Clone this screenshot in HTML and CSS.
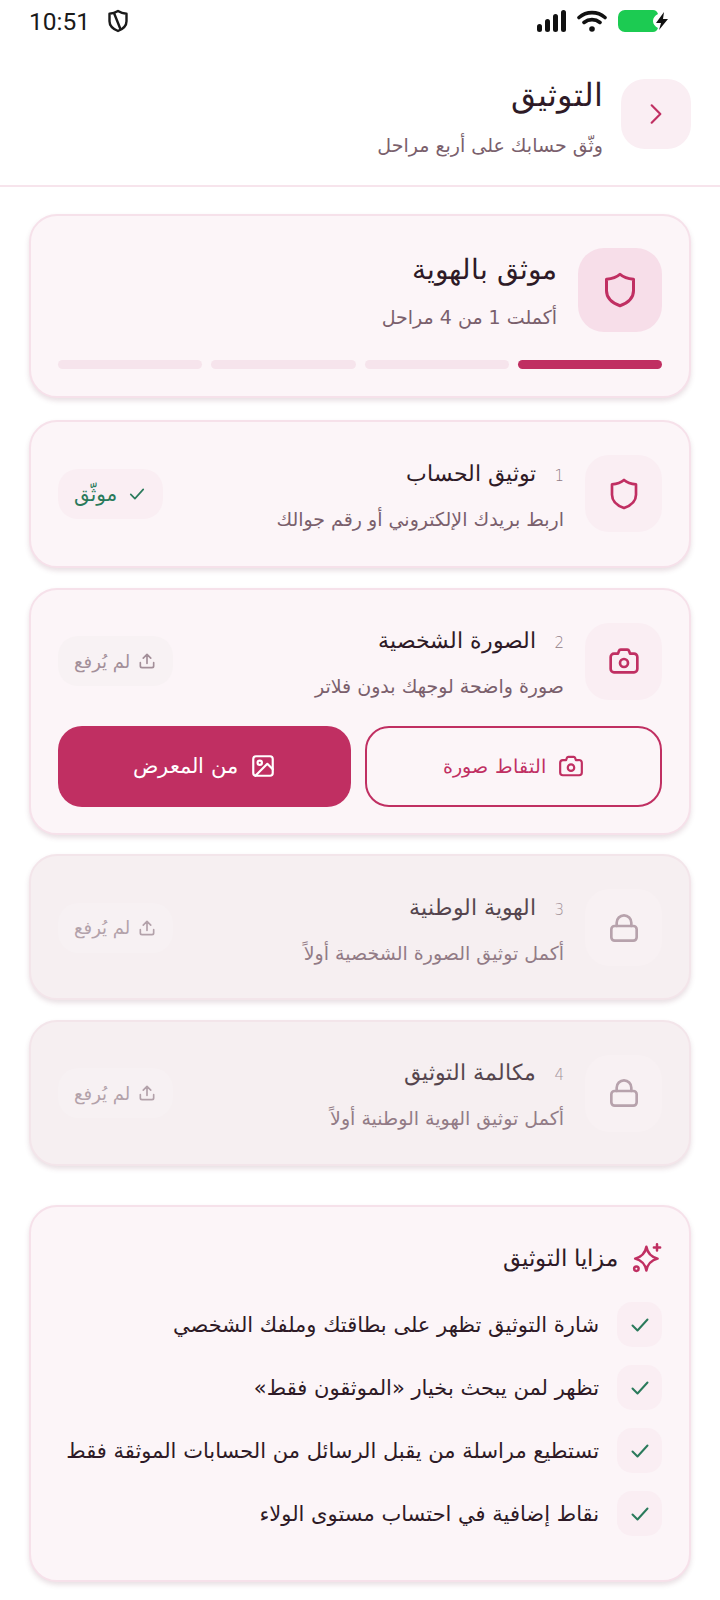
FILE: index.html
```html
<!DOCTYPE html>
<html lang="ar" dir="rtl">
  <head>
    <meta charset="UTF-8" />
    <meta name="viewport" content="width=device-width, initial-scale=1.0" />
    <title>التوثيق</title>
    <link rel="stylesheet" href="styles.css">
  </head>
  <body>
    <svg class="defs" width="0" height="0">
      <defs>
        <symbol id="shield" viewBox="0 0 24 24"><path d="M12 1.500c2 1.800 5 3 9 3.300v7.700c0 4.500-3.500 8-9 10-5.500-2-9-5.500-9-10V4.800c4-.3 7-1.500 9-3.300z"/></symbol>
        <symbol id="camera" viewBox="0 0 24 24"><path d="M7.500 6.500l.7-2c.2-.6.7-1 1.300-1h5c.6 0 1.100.4 1.300 1l.7 2h2.500A2.500 2.500 0 0 1 22 9v9a2.500 2.500 0 0 1-2.500 2.500h-15A2.500 2.500 0 0 1 2 18V9a2.500 2.500 0 0 1 2.500-2.500z"/><circle cx="12" cy="13.500" r="3"/></symbol>
        <symbol id="lock" viewBox="0 0 24 24"><rect x="2.500" y="10.500" width="19" height="11" rx="2.500"/><path d="M6.500 10.500V8a5.500 5.500 0 0 1 11 0v2.500"/></symbol>
        <symbol id="upload" viewBox="0 0 24 24"><path d="M12 15V4M7.500 8.500L12 4l4.500 4.500M4 14v4a2 2 0 0 0 2 2h12a2 2 0 0 0 2-2v-4"/></symbol>
        <symbol id="check" viewBox="0 0 24 24"><path d="M4.500 12.500l5 5 10-11"/></symbol>
        <symbol id="image" viewBox="0 0 24 24"><rect x="3" y="3" width="18" height="18" rx="2.500"/><circle cx="9" cy="9" r="2"/><path d="M21 15l-5-5L5 21"/></symbol>
      </defs>
    </svg>

    <div class="status">
      <div class="status-side">
        <span class="time">10:51</span>
        <svg class="status-shield" viewBox="0 0 24 24"><path d="M12 2c2.600 1.700 5.200 2.500 8.500 2.700v7.500c0 4.300-3.400 7.700-8.500 9.800-5.100-2.100-8.500-5.500-8.500-9.800V4.700C6.800 4.500 9.400 3.700 12 2z"/><path d="M8 4l6 15"/></svg>
      </div>
      <div class="status-side">
        <svg class="signal" viewBox="0 0 30 22"><rect x="1" y="14" width="5" height="8" rx="2.500"/><rect x="9" y="9" width="5" height="13" rx="2.500"/><rect x="17" y="4" width="5" height="18" rx="2.500"/><rect x="25" y="0" width="5" height="22" rx="2.500"/></svg>
        <svg class="wifi" viewBox="0 0 30 22"><path d="M2 7.500c7.500-6.500 18.500-6.500 26 0M7 12.500c4.800-3.800 11.200-3.800 16 0"/><circle cx="15" cy="19" r="2.800"/></svg>
        <svg class="battery" viewBox="0 0 52 22"><path class="battery-fill" d="M7 0h27a6 6 0 0 1 6 4c-3 1.500-5 4-5 7s2 5.500 5 7a6 6 0 0 1-6 4H7a7 7 0 0 1-7-7V7a7 7 0 0 1 7-7z"/><path d="M46 2l-8 11h5l-2 7 9-11h-5z"/></svg>
      </div>
    </div>

    <header class="top">
      <button class="back">
        <svg viewBox="0 0 24 24"><path d="M8 4l8 8-8 8"/></svg>
      </button>
      <div>
        <h1>التوثيق</h1>
        <p>وثّق حسابك على أربع مراحل</p>
      </div>
    </header>

    <main class="list">
      <section class="card card-summary">
        <div class="row">
          <div class="box box-big"><svg class="ico"><use href="#shield"/></svg></div>
          <div class="info">
            <h2>موثق بالهوية</h2>
            <p>أكملت 1 من 4 مراحل</p>
          </div>
        </div>
        <div class="progress">
          <span class="on"></span><span></span><span></span><span></span>
        </div>
      </section>

      <section class="card card-done">
        <div class="row">
          <div class="box"><svg class="ico"><use href="#shield"/></svg></div>
          <div class="info">
            <h3><small>1</small>توثيق الحساب</h3>
            <p>اربط بريدك الإلكتروني أو رقم جوالك</p>
          </div>
          <div class="pill pill-ok"><svg><use href="#check"/></svg>موثّق</div>
        </div>
      </section>

      <section class="card card-actions">
        <div class="row">
          <div class="box"><svg class="ico"><use href="#camera"/></svg></div>
          <div class="info">
            <h3><small>2</small>الصورة الشخصية</h3>
            <p>صورة واضحة لوجهك بدون فلاتر</p>
          </div>
          <div class="pill"><svg><use href="#upload"/></svg>لم يُرفع</div>
        </div>
        <div class="actions">
          <button class="btn btn-line"><svg><use href="#camera"/></svg>التقاط صورة</button>
          <button class="btn btn-fill"><svg><use href="#image"/></svg>من المعرض</button>
        </div>
      </section>

      <section class="card locked">
        <div class="row">
          <div class="box"><svg class="ico"><use href="#lock"/></svg></div>
          <div class="info">
            <h3><small>3</small>الهوية الوطنية</h3>
            <p>أكمل توثيق الصورة الشخصية أولاً</p>
          </div>
          <div class="pill"><svg><use href="#upload"/></svg>لم يُرفع</div>
        </div>
      </section>

      <section class="card locked">
        <div class="row">
          <div class="box"><svg class="ico"><use href="#lock"/></svg></div>
          <div class="info">
            <h3><small>4</small>مكالمة التوثيق</h3>
            <p>أكمل توثيق الهوية الوطنية أولاً</p>
          </div>
          <div class="pill"><svg><use href="#upload"/></svg>لم يُرفع</div>
        </div>
      </section>

      <section class="card perks">
        <div class="perks-head">
          <svg viewBox="0 0 24 24"><path d="M11.500 3c.9 5 3.100 8 9 9.500-5.900 1.500-8.100 4.500-9 9.500-.9-5-3.100-8-9-9.500 5.900-1.500 8.100-4.500 9-9.500z"/><path d="M20 1v5M17.500 3.500h5"/><circle cx="3.500" cy="20.500" r="1.800"/></svg>
          <h3>مزايا التوثيق</h3>
        </div>
        <ul>
          <li><span class="tick"><svg><use href="#check"/></svg></span>شارة التوثيق تظهر على بطاقتك وملفك الشخصي</li>
          <li><span class="tick"><svg><use href="#check"/></svg></span>تظهر لمن يبحث بخيار «الموثقون فقط»</li>
          <li><span class="tick"><svg><use href="#check"/></svg></span>تستطيع مراسلة من يقبل الرسائل من الحسابات الموثقة فقط</li>
          <li><span class="tick"><svg><use href="#check"/></svg></span>نقاط إضافية في احتساب مستوى الولاء</li>
        </ul>
      </section>
    </main>
  </body>
</html>
```

FILE: styles.css
```css
* {
  box-sizing: border-box;
  margin: 0;
  padding: 0;
}
body {
  width: 720px;
  height: 1600px;
  overflow: hidden;
  background: #fff;
  color: #2e1a26;
  font-family: "DejaVu Sans", "Noto Sans", sans-serif;
}
svg {
  fill: none;
  stroke: currentColor;
  stroke-width: 2;
  stroke-linecap: round;
  stroke-linejoin: round;
}
.defs {
  position: absolute;
}

.status {
  direction: ltr;
  height: 48px;
  padding: 0 50px 6px 29px;
  display: flex;
  justify-content: space-between;
  align-items: center;
}
.status-side {
  display: flex;
  align-items: center;
  gap: 11px;
}
.time {
  font-family: Roboto, sans-serif;
  font-size: 24.500px;
  color: #1a1a1a;
  margin-right: 5px;
}
.status-shield {
  width: 24px;
  height: 24px;
  color: #1a1a1a;
  stroke-width: 2.400;
}
.signal {
  width: 30px;
  height: 22px;
  fill: #111;
  stroke: none;
}
.wifi {
  width: 30px;
  height: 22px;
  stroke: #111;
  stroke-width: 3.600;
}
.wifi circle {
  fill: #111;
  stroke: none;
}
.battery {
  width: 52px;
  height: 22px;
  stroke: none;
  fill: #111;
}
.battery .battery-fill {
  fill: #1ccb52;
}

.top {
  height: 139px;
  padding: 31px 29px 0;
  display: flex;
  gap: 18px;
  border-bottom: 2px solid #f7e4ec;
}
.back {
  width: 70px;
  height: 70px;
  border: 0;
  border-radius: 24px;
  background: #faeef3;
  color: #c02f62;
  display: flex;
  align-items: center;
  justify-content: center;
}
.back svg {
  width: 26px;
  height: 26px;
}
.top h1 {
  font-size: 32px;
  font-weight: 300;
  line-height: 32px;
}
.top p {
  font-size: 19px;
  line-height: 28px;
  margin-top: 20px;
  color: #7a5f6c;
}

.list {
  padding: 27px 29px 0;
  display: flex;
  flex-direction: column;
  gap: 19.500px;
}
.card {
  background: #fcf5f8;
  border: 2px solid #f6e1ea;
  border-radius: 28px;
  padding: 33px 27px 32px;
  box-shadow: 0 3px 5px rgba(120, 60, 90, 0.16);
}
.card-summary {
  padding: 32px 27px 27px;
  margin-bottom: 2.500px;
}
.card-summary .info p {
  margin-top: 14px;
}
.card-done {
  padding-bottom: 34px;
}
.card-actions {
  padding-bottom: 26px;
}
.locked {
  background: #f6eff1;
  border-color: #f3e5ea;
}
.locked h3,
.locked p,
.locked .box,
.locked .pill {
  opacity: 0.8;
}
.row {
  display: flex;
  align-items: center;
  gap: 21px;
}
.info {
  flex: 1;
}
.box {
  width: 77px;
  height: 77px;
  border-radius: 24px;
  background: #faeef3;
  color: #c02f62;
  display: flex;
  align-items: center;
  justify-content: center;
  flex: none;
}
.box-big {
  width: 84px;
  height: 84px;
  border-radius: 26px;
  background: #f7dee9;
}
.ico {
  width: 32px;
  height: 32px;
}
.box-big .ico {
  width: 36px;
  height: 36px;
}
.locked .box {
  color: #a8909b;
  background: #f9f2f4;
}
.info h2 {
  font-size: 28px;
  font-weight: 300;
  line-height: 40px;
}
.info h3 {
  font-size: 22px;
  font-weight: 300;
  line-height: 36px;
}
.info small {
  font-size: 15px;
  color: #8f7b85;
  margin-left: 18px;
}
.info p {
  font-size: 19px;
  line-height: 26px;
  margin-top: 12px;
  color: #7a5f6c;
}
.pill {
  height: 50px;
  padding: 0 16px;
  border-radius: 20px;
  background: #f8f2f4;
  color: #a38f99;
  font-size: 18px;
  display: flex;
  align-items: center;
  gap: 7px;
}
.pill svg {
  width: 20px;
  height: 20px;
}
.pill-ok {
  background: #faeef3;
  color: #2a7a5b;
  font-size: 20px;
  gap: 10px;
}
.progress {
  display: flex;
  gap: 9px;
  margin-top: 28px;
}
.progress span {
  flex: 1;
  height: 9px;
  border-radius: 5px;
  background: #f6e4ec;
}
.progress .on {
  background: #c02f62;
}
.actions {
  display: flex;
  gap: 14px;
  margin-top: 26px;
}
.btn {
  flex: 1;
  height: 81px;
  border-radius: 24px;
  font-family: inherit;
  font-size: 19px;
  font-weight: 300;
  display: flex;
  align-items: center;
  justify-content: center;
  gap: 12px;
}
.btn svg {
  width: 26px;
  height: 26px;
}
.btn-line {
  background: transparent;
  border: 2px solid #c02f62;
  color: #c02f62;
}
.btn-fill {
  background: #c02f62;
  border: 0;
  color: #fff;
  font-size: 21px;
}

.perks {
  margin-top: 20px;
  padding: 36px 27px 44px;
}
.perks-head {
  display: flex;
  align-items: center;
  gap: 14px;
}
.perks-head svg {
  width: 30px;
  height: 30px;
  color: #c02f62;
}
.perks-head h3 {
  font-size: 23px;
  font-weight: 300;
  line-height: 30px;
}
.perks ul {
  list-style: none;
  margin-top: 29px;
  display: flex;
  flex-direction: column;
  gap: 18px;
}
.perks li {
  font-size: 21px;
  display: flex;
  align-items: center;
  gap: 18px;
}
.tick {
  width: 45px;
  height: 45px;
  border-radius: 15px;
  background: #faeef3;
  color: #2a7a5b;
  display: flex;
  align-items: center;
  justify-content: center;
  flex: none;
}
.tick svg {
  width: 24px;
  height: 24px;
}
```
